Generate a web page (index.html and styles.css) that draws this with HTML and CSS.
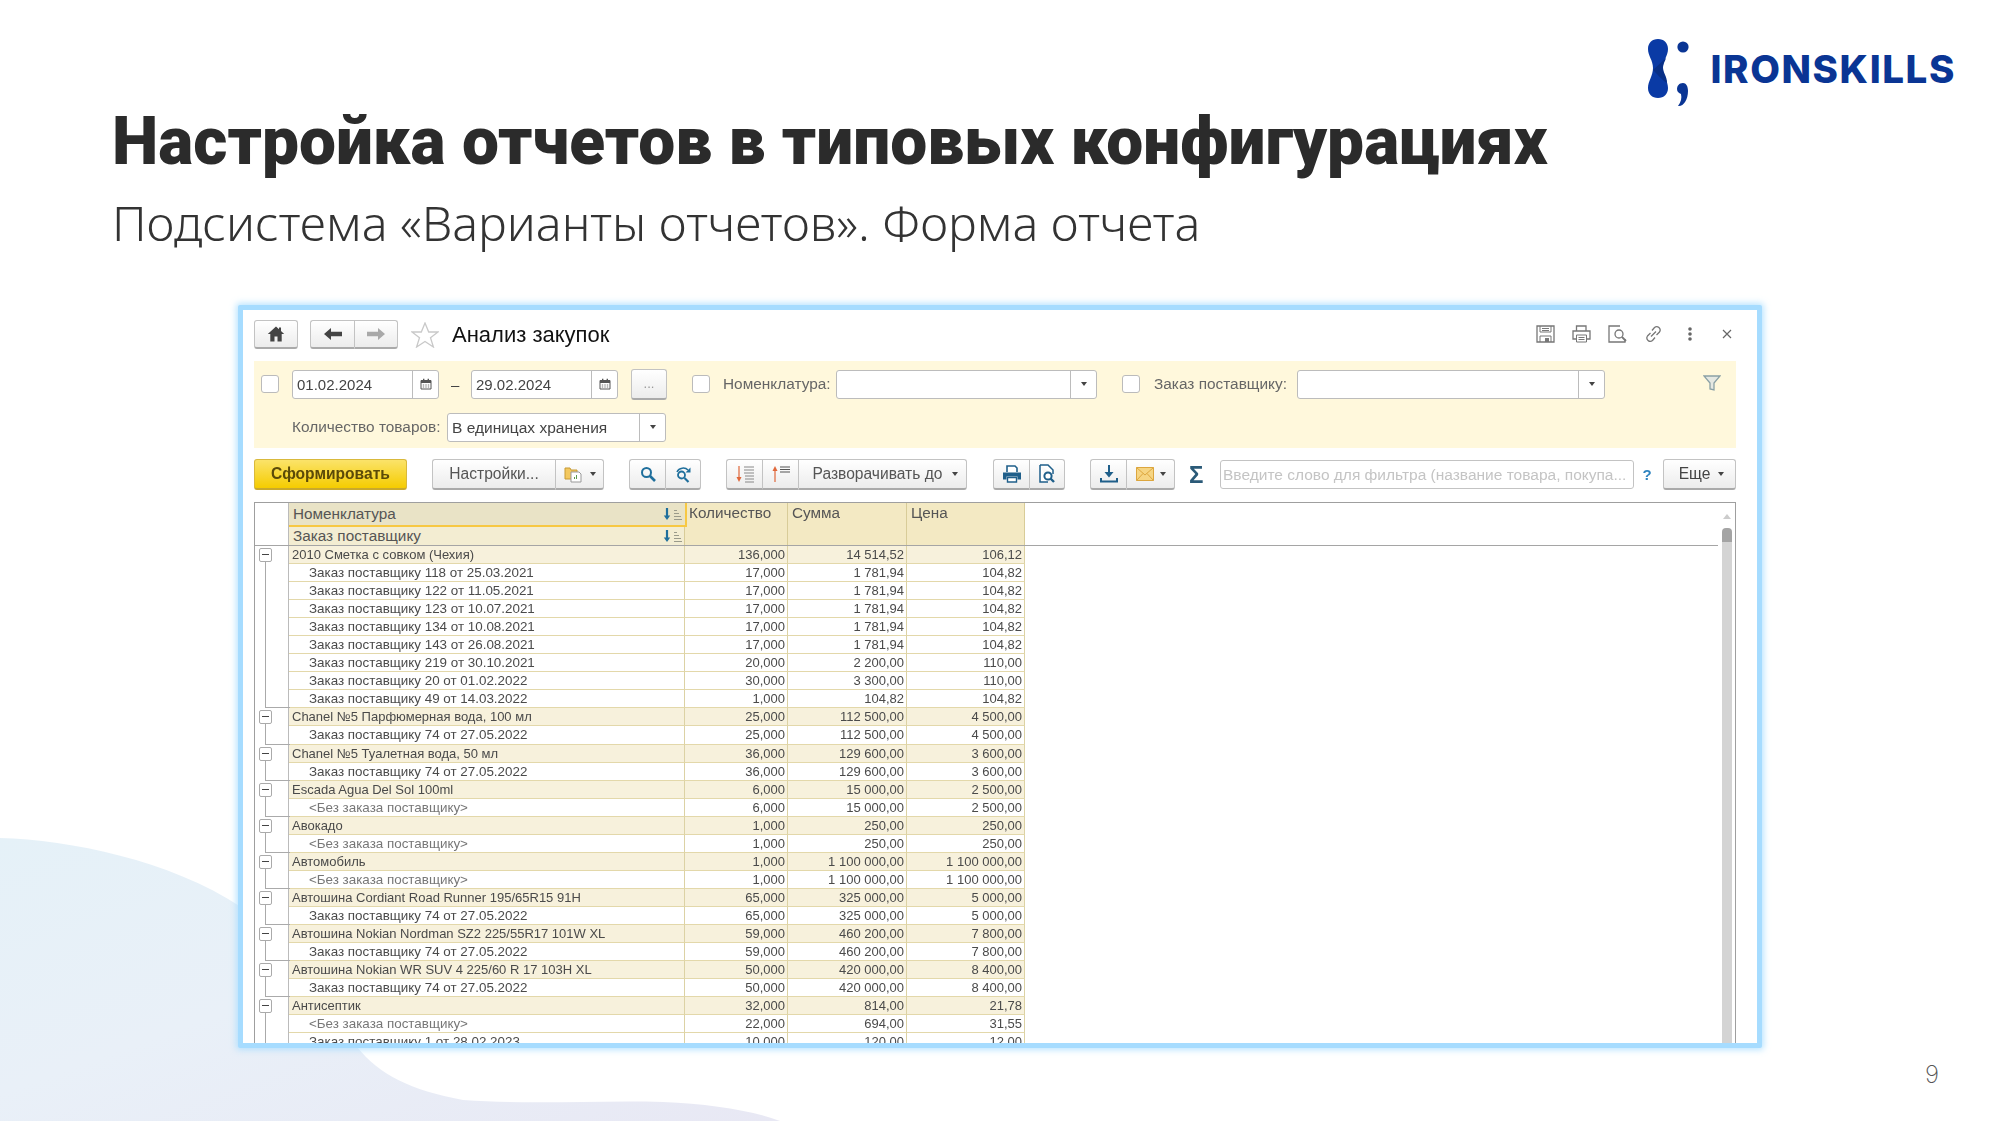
FILE: index.html
```html
<!DOCTYPE html>
<html lang="ru">
<head>
<meta charset="utf-8">
<title>Настройка отчетов</title>
<link rel="stylesheet" href="styles.css">
</head>
<body>
<svg class="sprite" width="0" height="0">
  <defs>
    <symbol id="i-cal" viewBox="0 0 12 12"><path d="M1 2.5h10v8.5H1z" fill="none" stroke="#555" stroke-width="1"/><path d="M1 2h10v3H1zM3 .8h1.4v2H3zM7.6 .8H9v2H7.6z" fill="#555"/><path d="M2.8 6.4h1.4v1.2H2.8zM5.3 6.4h1.4v1.2H5.3zM7.8 6.4h1.4v1.2H7.8zM2.8 8.4h1.4v1.2H2.8zM5.3 8.4h1.4v1.2H5.3zM7.8 8.4h1.4v1.2H7.8z" fill="#777"/></symbol>
    <symbol id="i-sort" viewBox="0 0 20 14"><path d="M4 1v9" stroke="#1f6f9c" stroke-width="2.2"/><path d="M.8 8.5h6.4L4 13z" fill="#1f6f9c"/><path d="M11 3.5h3M11 6.5h5M11 9.5h7M11 12.5h8" stroke="#9a9a8a" stroke-width="1"/></symbol>
    <symbol id="i-print" viewBox="0 0 20 20"><path d="M5 8V2h8l2 2v4" fill="#fff" stroke="#1f5f8a" stroke-width="1.6"/><path d="M1 8.5h18v7h-3.5v-3h-11v3H1z" fill="#1f5f8a"/><path d="M5.5 13.5h9V18h-9z" fill="#fff" stroke="#1f5f8a" stroke-width="1.4"/></symbol>
    <symbol id="i-preview" viewBox="0 0 20 20"><path d="M3 1h8l5 5v4M3 1v17h8" fill="#fff" stroke="#1f5f8a" stroke-width="1.5"/><circle cx="11" cy="12" r="3.6" fill="#fff" stroke="#1f5f8a" stroke-width="2"/><path d="M13.5 14.5l3.5 3.5" stroke="#1f5f8a" stroke-width="2.4"/></symbol>
  </defs>
</svg>
<main class="slide">
  <svg class="blob" viewBox="0 0 800 300" width="800" height="300" aria-hidden="true">
    <defs><linearGradient id="blobfill" x1="0" y1="0" x2="1" y2="1"><stop offset="0" stop-color="#e5f1f8"/><stop offset=".45" stop-color="#e9f0f8"/><stop offset="1" stop-color="#e8e8f4"/></linearGradient></defs>
    <path d="M0 13C70 15 170 35 241 82L300 150C320 190 340 200 357 222C380 250 410 265 463 275C530 280 600 275 663 277C710 279 750 285 780 296L0 296Z" fill="url(#blobfill)"/>
  </svg>

  <header class="brand">
    <div class="logo">
      <svg class="logo-mark" viewBox="0 0 44 70" width="44" height="70" aria-hidden="true">
        <path d="M11 1C5 1 1 5 1 11C1 18 6 22 6 30C6 38 1 43 1 50C1 56 5 60 11 60C17 60 21 56 21 50C21 43 16 38 16 30C16 22 21 18 21 11C21 5 17 1 11 1Z" fill="#0a3aa5"/>
        <path d="M6 32C10 36 15 42 20 45C20 38 16 35 16 30C16 25 18 24 19 20Z" fill="#082f86"/>
        <circle cx="36" cy="9" r="5.6" fill="#0a3594"/>
        <path d="M36 45C32 45 30 48 30 51C30 54 32 55 34 56C35 60 34 64 31 68C36 69 41 62 41 53C41 48 39 45 36 45Z" fill="#0a3594"/>
      </svg>
      <span class="logo-text">IRONSKILLS</span>
    </div>
  </header>
  <h1 class="title">Настройка отчетов в типовых конфигурациях</h1>
  <p class="subtitle">Подсистема «Варианты отчетов». Форма отчета</p>

  <section class="window">
    <div class="window-inner">
      <div class="topbar">
        <button class="btn home"><svg width="18" height="16" viewBox="0 0 18 16"><path d="M9 .5L.8 8h2.5v7.5h4.2V10.500h3v5h4.200V8h2.500L14 5V1.500h-2V3.200z" fill="#444"/></svg></button>
        <div class="btn-group nav">
          <button class="btn seg"><svg width="18" height="12" viewBox="0 0 18 12"><path d="M0 6l7-6v3.800h11v4.400H7V12z" fill="#444"/></svg></button>
          <button class="btn seg"><svg width="18" height="12" viewBox="0 0 18 12"><path d="M18 6l-7-6v3.800H0v4.400h11V12z" fill="#a9a9a9"/></svg></button>
        </div>
        <svg class="star" width="28" height="26" viewBox="0 0 28 26"><path d="M14 1l3.700 9h9.300l-7.500 5.800 2.900 9.200-8.400-5.500-8.400 5.500 2.900-9.200L1 10h9.300z" fill="#fff" stroke="#c9c9c9" stroke-width="1.300"/></svg>
        <span class="form-title">Анализ закупок</span>
        <div class="top-icons">
          <svg width="19" height="18" viewBox="0 0 19 18"><path d="M1 1h17v16H1z" fill="none" stroke="#777" stroke-width="1.300"/><path d="M4 1v6h11V1M6 3.500h7M6 5.500h7" fill="none" stroke="#777"/><path d="M4 17v-6h11v6" fill="none" stroke="#777"/><path d="M9 13h4v4H9z" fill="#777"/></svg>
          <svg width="19" height="18" viewBox="0 0 19 18"><path d="M4.500 6V1H14v5" fill="none" stroke="#777" stroke-width="1.300"/><path d="M4 14H1V6h17v8h-3" fill="none" stroke="#777" stroke-width="1.300"/><path d="M4.500 10h10v7h-10zM6.500 12.500h6M6.500 14.500h6" fill="none" stroke="#777"/></svg>
          <svg width="19" height="18" viewBox="0 0 19 18"><path d="M12 1H1v16h16v-3" fill="none" stroke="#777" stroke-width="1.300"/><circle cx="11" cy="9" r="4" fill="none" stroke="#777" stroke-width="1.300"/><path d="M14 12l4 4" stroke="#777" stroke-width="1.800"/></svg>
          <svg width="19" height="18" viewBox="0 0 19 18"><path d="M8 5.500l2.500-3a3.400 3.400 0 0 1 5 4.500l-3 3M11 12.500l-2.500 3a3.400 3.400 0 0 1-5-4.500l3-3M7 11.500l5-5" fill="none" stroke="#777" stroke-width="1.300"/></svg>
          <svg class="dots" width="4" height="14" viewBox="0 0 4 14"><circle cx="2" cy="2" r="1.800" fill="#666"/><circle cx="2" cy="7" r="1.800" fill="#666"/><circle cx="2" cy="12" r="1.800" fill="#666"/></svg>
          <svg class="close" width="10" height="10" viewBox="0 0 10 10"><path d="M1 1l8 8M9 1l-8 8" stroke="#666" stroke-width="1.200"/></svg>
        </div>
      </div>

      <div class="filters">
        <div class="filter-row">
          <span class="check first"></span>
          <div class="field date"><span class="field-val">01.02.2024</span><span class="field-btn"><svg width="12" height="12"><use href="#i-cal"/></svg></span></div>
          <span class="dash">–</span>
          <div class="field date"><span class="field-val">29.02.2024</span><span class="field-btn"><svg width="12" height="12"><use href="#i-cal"/></svg></span></div>
          <button class="btn more">...</button>
          <span class="check second"></span>
          <span class="label lbl-nom">Номенклатура:</span>
          <div class="field combo-a"><span class="field-val"></span><span class="field-btn"><i class="caret"></i></span></div>
          <span class="check third"></span>
          <span class="label lbl-ord">Заказ поставщику:</span>
          <div class="field combo-b"><span class="field-val"></span><span class="field-btn"><i class="caret"></i></span></div>
          <svg class="funnel" width="18" height="16" viewBox="0 0 18 16"><path d="M1 1h16l-6 7v7l-4-1V8z" fill="#e5e8e2" stroke="#8aa0a5" stroke-width="1.300"/></svg>
        </div>
        <div class="filter-row second-row">
          <span class="label lbl-qty">Количество товаров:</span>
          <div class="field combo-c"><span class="field-val">В единицах хранения</span><span class="field-btn"><i class="caret"></i></span></div>
        </div>
      </div>

      <div class="toolbar">
        <button class="btn primary">Сформировать</button>
        <div class="btn-group g-settings">
          <button class="btn seg s-settings">Настройки...</button>
          <button class="btn seg s-folder"><svg width="18" height="18" viewBox="0 0 18 18"><path d="M1 3h5l1 2h6v9H1z" fill="#f3c85f" stroke="#c79a35"/><path d="M7 7h8l2 2v8H7z" fill="#fff" stroke="#999"/><path d="M10 14v-2h1v2zM12 14v-4h1v4z" fill="#5b9a4a"/></svg><i class="caret"></i></button>
        </div>
        <div class="btn-group g-find">
          <button class="btn seg s-icon"><svg width="16" height="16" viewBox="0 0 16 16"><circle cx="6.500" cy="6.500" r="4.500" fill="none" stroke="#1f6f9c" stroke-width="2"/><path d="M10 10l5 5" stroke="#1f6f9c" stroke-width="2.600"/></svg></button>
          <button class="btn seg s-icon"><svg width="17" height="17" viewBox="0 0 17 17"><circle cx="6.500" cy="9" r="3.500" fill="none" stroke="#1f6f9c" stroke-width="1.800"/><path d="M9.500 12l4 4" stroke="#1f6f9c" stroke-width="2.200"/><path d="M2 6C4 1.500 10 1 13 4" fill="none" stroke="#1f6f9c" stroke-width="1.500"/><path d="M15.500 1.500v5h-5z" fill="#1f6f9c"/></svg></button>
        </div>
        <div class="btn-group g-expand">
          <button class="btn seg s-icon"><svg width="20" height="18" viewBox="0 0 20 18"><path d="M4 1v14" stroke="#e0673a" stroke-width="1.200"/><path d="M1.500 12h5L4 17z" fill="#e0673a"/><path d="M9 2h10M9 5h10M9 8h10M10 11h9M10 14h9M10 17h9" stroke="#888" stroke-width="1"/></svg></button>
          <button class="btn seg s-icon"><svg width="20" height="18" viewBox="0 0 20 18"><path d="M4 3v14" stroke="#e0673a" stroke-width="1.200"/><path d="M1.500 6h5L4 1z" fill="#e0673a"/><path d="M9 2h10M9 4.500h10M9 7h10" stroke="#555" stroke-width="1.200"/></svg></button>
          <button class="btn seg s-expand">Разворачивать до<i class="caret"></i></button>
        </div>
        <div class="btn-group g-print">
          <button class="btn seg s-icon"><svg width="20" height="20"><use href="#i-print"/></svg></button>
          <button class="btn seg s-icon"><svg width="20" height="20"><use href="#i-preview"/></svg></button>
        </div>
        <div class="btn-group g-send">
          <button class="btn seg s-icon"><svg width="18" height="18" viewBox="0 0 18 18"><path d="M9 0v9" stroke="#1f5f8a" stroke-width="2"/><path d="M4.500 7h9L9 12.500z" fill="#1f5f8a"/><path d="M1 13v3.500h16V13" fill="none" stroke="#1f5f8a" stroke-width="2"/></svg></button>
          <button class="btn seg s-mail"><svg width="18" height="14" viewBox="0 0 18 14"><path d="M.5.500h17v13H.5z" fill="#f6d583" stroke="#dca63e"/><path d="M.5.500L9 8l8.500-7.500M.5 13.500L7 6.500M17.500 13.500L11 6.500" fill="none" stroke="#dca63e"/></svg><i class="caret"></i></button>
        </div>
        <span class="sigma">Σ</span>
        <div class="search">Введите слово для фильтра (название товара, покупа...</div>
        <span class="help">?</span>
        <button class="btn esche">Еще<i class="caret"></i></button>
      </div>

      <div class="report">
        <div class="grid">
          <div class="grid-head">
            <div class="tree-head"></div>
            <div class="h-name">
              <div class="h-nom"><span>Номенклатура</span><svg width="20" height="14"><use href="#i-sort"/></svg></div>
              <div class="h-ord"><span>Заказ поставщику</span><svg width="20" height="14"><use href="#i-sort"/></svg></div>
            </div>
            <div class="h-col c-qty">Количество</div>
            <div class="h-col c-sum">Сумма</div>
            <div class="h-col c-price">Цена</div>
          </div>

          <div class="row group"><div class="tree t-box"><i class="minus"></i></div><div class="c c-name">2010 Сметка с совком (Чехия)</div><div class="c c-qty">136,000</div><div class="c c-sum">14 514,52</div><div class="c c-price">106,12</div></div>
          <div class="row"><div class="tree t-mid"></div><div class="c c-name sub">Заказ поставщику 118 от 25.03.2021</div><div class="c c-qty">17,000</div><div class="c c-sum">1 781,94</div><div class="c c-price">104,82</div></div>
          <div class="row"><div class="tree t-mid"></div><div class="c c-name sub">Заказ поставщику 122 от 11.05.2021</div><div class="c c-qty">17,000</div><div class="c c-sum">1 781,94</div><div class="c c-price">104,82</div></div>
          <div class="row"><div class="tree t-mid"></div><div class="c c-name sub">Заказ поставщику 123 от 10.07.2021</div><div class="c c-qty">17,000</div><div class="c c-sum">1 781,94</div><div class="c c-price">104,82</div></div>
          <div class="row"><div class="tree t-mid"></div><div class="c c-name sub">Заказ поставщику 134 от 10.08.2021</div><div class="c c-qty">17,000</div><div class="c c-sum">1 781,94</div><div class="c c-price">104,82</div></div>
          <div class="row"><div class="tree t-mid"></div><div class="c c-name sub">Заказ поставщику 143 от 26.08.2021</div><div class="c c-qty">17,000</div><div class="c c-sum">1 781,94</div><div class="c c-price">104,82</div></div>
          <div class="row"><div class="tree t-mid"></div><div class="c c-name sub">Заказ поставщику 219 от 30.10.2021</div><div class="c c-qty">20,000</div><div class="c c-sum">2 200,00</div><div class="c c-price">110,00</div></div>
          <div class="row"><div class="tree t-mid"></div><div class="c c-name sub">Заказ поставщику 20 от 01.02.2022</div><div class="c c-qty">30,000</div><div class="c c-sum">3 300,00</div><div class="c c-price">110,00</div></div>
          <div class="row"><div class="tree t-end"></div><div class="c c-name sub">Заказ поставщику 49 от 14.03.2022</div><div class="c c-qty">1,000</div><div class="c c-sum">104,82</div><div class="c c-price">104,82</div></div>

          <div class="row group"><div class="tree t-box"><i class="minus"></i></div><div class="c c-name">Chanel №5 Парфюмерная вода, 100 мл</div><div class="c c-qty">25,000</div><div class="c c-sum">112 500,00</div><div class="c c-price">4 500,00</div></div>
          <div class="row"><div class="tree t-end"></div><div class="c c-name sub">Заказ поставщику 74 от 27.05.2022</div><div class="c c-qty">25,000</div><div class="c c-sum">112 500,00</div><div class="c c-price">4 500,00</div></div>

          <div class="row group"><div class="tree t-box"><i class="minus"></i></div><div class="c c-name">Chanel №5 Туалетная вода, 50 мл</div><div class="c c-qty">36,000</div><div class="c c-sum">129 600,00</div><div class="c c-price">3 600,00</div></div>
          <div class="row"><div class="tree t-end"></div><div class="c c-name sub">Заказ поставщику 74 от 27.05.2022</div><div class="c c-qty">36,000</div><div class="c c-sum">129 600,00</div><div class="c c-price">3 600,00</div></div>

          <div class="row group"><div class="tree t-box"><i class="minus"></i></div><div class="c c-name">Escada Agua Del Sol 100ml</div><div class="c c-qty">6,000</div><div class="c c-sum">15 000,00</div><div class="c c-price">2 500,00</div></div>
          <div class="row"><div class="tree t-end"></div><div class="c c-name sub muted">&lt;Без заказа поставщику&gt;</div><div class="c c-qty">6,000</div><div class="c c-sum">15 000,00</div><div class="c c-price">2 500,00</div></div>

          <div class="row group"><div class="tree t-box"><i class="minus"></i></div><div class="c c-name">Авокадо</div><div class="c c-qty">1,000</div><div class="c c-sum">250,00</div><div class="c c-price">250,00</div></div>
          <div class="row"><div class="tree t-end"></div><div class="c c-name sub muted">&lt;Без заказа поставщику&gt;</div><div class="c c-qty">1,000</div><div class="c c-sum">250,00</div><div class="c c-price">250,00</div></div>

          <div class="row group"><div class="tree t-box"><i class="minus"></i></div><div class="c c-name">Автомобиль</div><div class="c c-qty">1,000</div><div class="c c-sum">1 100 000,00</div><div class="c c-price">1 100 000,00</div></div>
          <div class="row"><div class="tree t-end"></div><div class="c c-name sub muted">&lt;Без заказа поставщику&gt;</div><div class="c c-qty">1,000</div><div class="c c-sum">1 100 000,00</div><div class="c c-price">1 100 000,00</div></div>

          <div class="row group"><div class="tree t-box"><i class="minus"></i></div><div class="c c-name">Автошина Cordiant Road Runner 195/65R15 91H</div><div class="c c-qty">65,000</div><div class="c c-sum">325 000,00</div><div class="c c-price">5 000,00</div></div>
          <div class="row"><div class="tree t-end"></div><div class="c c-name sub">Заказ поставщику 74 от 27.05.2022</div><div class="c c-qty">65,000</div><div class="c c-sum">325 000,00</div><div class="c c-price">5 000,00</div></div>

          <div class="row group"><div class="tree t-box"><i class="minus"></i></div><div class="c c-name">Автошина Nokian Nordman SZ2 225/55R17 101W XL</div><div class="c c-qty">59,000</div><div class="c c-sum">460 200,00</div><div class="c c-price">7 800,00</div></div>
          <div class="row"><div class="tree t-end"></div><div class="c c-name sub">Заказ поставщику 74 от 27.05.2022</div><div class="c c-qty">59,000</div><div class="c c-sum">460 200,00</div><div class="c c-price">7 800,00</div></div>

          <div class="row group"><div class="tree t-box"><i class="minus"></i></div><div class="c c-name">Автошина Nokian WR SUV 4 225/60 R 17 103H XL</div><div class="c c-qty">50,000</div><div class="c c-sum">420 000,00</div><div class="c c-price">8 400,00</div></div>
          <div class="row"><div class="tree t-end"></div><div class="c c-name sub">Заказ поставщику 74 от 27.05.2022</div><div class="c c-qty">50,000</div><div class="c c-sum">420 000,00</div><div class="c c-price">8 400,00</div></div>

          <div class="row group"><div class="tree t-box"><i class="minus"></i></div><div class="c c-name">Антисептик</div><div class="c c-qty">32,000</div><div class="c c-sum">814,00</div><div class="c c-price">21,78</div></div>
          <div class="row"><div class="tree t-mid"></div><div class="c c-name sub muted">&lt;Без заказа поставщику&gt;</div><div class="c c-qty">22,000</div><div class="c c-sum">694,00</div><div class="c c-price">31,55</div></div>
          <div class="row"><div class="tree t-mid"></div><div class="c c-name sub">Заказ поставщику 1 от 28.02.2023</div><div class="c c-qty">10,000</div><div class="c c-sum">120,00</div><div class="c c-price">12,00</div></div>
        </div>
        <div class="scrollbar"><i class="scroll-up"></i><i class="scroll-thumb"></i><i class="scroll-track"></i></div>
      </div>
    </div>
  </section>
  <span class="page-num">9</span>
</main>
</body>
</html>
```
FILE: styles.css
```css
* { box-sizing: border-box; }
html, body { margin: 0; padding: 0; background: #fff; }
.sprite { position: absolute; }
.slide {
  position: relative;
  width: 2000px;
  height: 1125px;
  overflow: hidden;
  background: #fff;
  font-family: "Noto Sans", "Open Sans", sans-serif;
}
.blob { position: absolute; left: 0; top: 825px; }

.brand { display: flex; justify-content: flex-end; height: 107px; padding: 38px 44px 0 0; position: relative; }
.logo { display: flex; align-items: flex-start; }
.logo-mark { display: block; }
.logo-text {
  margin: 11px 0 0 19px;
  font-family: Inter, "Liberation Sans", sans-serif;
  font-weight: 800;
  font-size: 38.500px;
  line-height: 40px;
  letter-spacing: 1.600px;
  color: #0a3594;
}
.title {
  position: relative;
  margin: 0 0 0 112px;
  font-family: Roboto, "Noto Sans", sans-serif;
  font-size: 65.800px;
  font-weight: 900;
  line-height: 70px;
  color: #2b2b2b;
  white-space: nowrap;
}
.subtitle {
  position: relative;
  margin: 13px 0 0 112px;
  font-size: 48.400px;
  font-weight: 300;
  line-height: 64px;
  color: #333;
  white-space: nowrap;
}

.window {
  position: relative;
  margin: 51px 0 0 238px;
  width: 1524px;
  height: 743px;
  border: 5px solid #a6dcff;
  border-radius: 2px;
  background: #fff;
  overflow: hidden;
  box-shadow: 0 0 6px 2px rgba(166, 220, 255, .75);
}
.window-inner {
  padding: 10px 21px 0 11px;
  height: 100%;
  font-family: "Liberation Sans", Arial, sans-serif;
  color: #444;
  filter: blur(.35px);
}

.btn {
  display: flex;
  align-items: center;
  justify-content: center;
  padding: 0;
  border: 1px solid #c3c3c3;
  border-bottom: 2px solid #aaa;
  border-radius: 3px;
  background: linear-gradient(#fff, #ececec);
  font: inherit;
  color: #444;
}
.btn-group { display: flex; }
.btn-group .seg { border-radius: 0; border-right-width: 0; height: 100%; }
.btn-group .seg:first-child { border-radius: 3px 0 0 3px; }
.btn-group .seg:last-child { border-radius: 0 3px 3px 0; border-right-width: 1px; }
.caret { display: inline-block; width: 0; height: 0; border: 3.500px solid transparent; border-top: 4px solid #444; border-bottom: 0; }

.topbar { display: flex; align-items: center; height: 29px; }
.home { width: 44px; height: 29px; }
.nav { margin-left: 12px; height: 29px; }
.nav .seg { width: 44px; }
.star { margin-left: 13px; }
.form-title { margin-left: 13px; font-size: 22px; color: #111; }
.top-icons { margin-left: auto; display: flex; align-items: center; gap: 17px; padding-bottom: 1px; }
.dots { margin-left: 8px; }
.close { margin-left: 13px; margin-right: 4px; }

.filters { margin: 12px 0 0 0; height: 87px; background: #fff8dc; padding-top: 8px; width: 1482px; }
.filter-row { display: flex; align-items: center; height: 30px; }
.second-row { margin-top: 13px; }
.check { width: 18px; height: 18px; background: #fff; border: 1px solid #bbb; border-radius: 3px; flex: none; }
.check.first { margin-left: 7px; }
.check.second { margin-left: 25px; }
.check.third { margin-left: 25px; }
.field { display: flex; height: 29px; background: #fff; border: 1px solid #bcbcbc; border-radius: 3px; font-size: 15px; color: #444; flex: none; }
.field-val { flex: 1; padding: 0 4px; line-height: 27px; white-space: nowrap; overflow: hidden; }
.field-btn { width: 26px; border-left: 1px solid #bcbcbc; display: flex; align-items: center; justify-content: center; }
.date { width: 147px; margin-left: 13px; }
.date + .dash + .date { margin-left: 10px; }
.dash { margin-left: 12px; width: 10px; font-size: 15px; }
.more { margin-left: 13px; width: 36px; height: 31px; color: #999; font-size: 13px; }
.label { font-size: 15.400px; color: #666; white-space: nowrap; }
.lbl-nom { margin-left: 13px; width: 113px; }
.combo-a { width: 261px; }
.lbl-ord { margin-left: 14px; width: 143px; }
.combo-b { width: 308px; }
.funnel { margin-left: 98px; margin-top: -3px; }
.lbl-qty { margin-left: 38px; width: 155px; }
.combo-c { width: 219px; font-size: 15.500px; }

.toolbar { display: flex; align-items: center; height: 31px; margin-top: 11px; width: 1482px; font-size: 15.600px; }
.toolbar .btn, .toolbar .btn-group { height: 31px; flex: none; }
.primary {
  width: 153px;
  background: linear-gradient(#fbe36a, #f5cc00);
  border-color: #d9b93c;
  border-bottom-color: #c9a92c;
  color: #5b4a08;
  font-weight: 700;
}
.g-settings { margin-left: 25px; }
.s-settings { width: 123px; color: #555; }
.s-folder { width: 49px; gap: 8px; }
.g-find { margin-left: 25px; }
.s-icon { width: 36px; }
.g-expand { margin-left: 25px; }
.s-expand { width: 169px; gap: 10px; padding-left: 6px; color: #555; }
.g-print { margin-left: 26px; }
.g-send { margin-left: 25px; }
.s-mail { width: 49px; gap: 6px; }
.sigma { margin-left: 14px; width: 31px; font-size: 24px; font-weight: 700; color: #2b5a78; }
.search { width: 414px; height: 29px; background: #fff; border: 1px solid #c3c3c3; border-radius: 3px; padding: 0 2px; line-height: 27px; color: #c4c4c4; font-size: 15.500px; white-space: nowrap; overflow: hidden; flex: none; }
.help { width: 26px; text-align: center; color: #2f84c0; font-size: 15px; font-weight: 700; flex: none; }
.esche { width: 73px; gap: 8px; padding-left: 4px; margin-left: auto; }

.report { display: flex; margin-top: 12px; width: 1482px; height: 600px; border: 1px solid #9f9f9f; border-bottom: 0; font-size: 13px; }
.grid { flex: 1; min-width: 0; }
.scrollbar { width: 17px; display: flex; flex-direction: column; align-items: center; }
.scroll-up { margin: 11px 0 9px; width: 0; height: 0; border: 4px solid transparent; border-bottom: 5px solid #ccc; border-top: 0; }
.scroll-thumb { width: 10px; height: 14px; background: #a4a4a4; border-radius: 4px 4px 0 0; }
.scroll-track { width: 10px; flex: 1; background: #d4d4d4; }

.grid-head { display: flex; height: 43px; border-bottom: 1px solid #a5a5a5; font-size: 15.300px; color: #555; }
.tree-head { width: 34px; border-right: 1px solid #bbb; flex: none; }
.h-name { width: 396px; flex: none; background: #f3edd2; border-right: 1px solid #d8cc98; position: relative; }
.h-nom, .h-ord { display: flex; align-items: center; justify-content: space-between; padding: 0 1px 0 4px; }
.h-nom { height: 24px; background: #e9e3c6; border-bottom: 2px solid #f7c843; margin-right: -3px; border-right: 2px solid #f7c843; position: relative; padding-right: 2px; }
.h-ord { height: 17px; }
.h-col { flex: none; background: #f3e9c3; border-right: 1px solid #d8cc98; padding: 1px 4px; }
.c-qty { width: 103px; }
.c-sum { width: 119px; }
.c-price { width: 118px; }

.row { display: flex; height: 18.050px; line-height: 17.500px; color: #4a4a4a; }
.c { flex: none; height: 100%; border-right: 1px solid #dcd2a4; border-bottom: 1.500px solid #e3d8aa; padding: 0 2px; white-space: nowrap; text-align: right; background: #fff; overflow: hidden; }
.group .c { background: #f7f1dc; }
.c-name { width: 396px; text-align: left; padding-left: 3px; }
.sub { padding-left: 20px; font-size: 13.400px; }
.muted { color: #777; }
.tree { position: relative; width: 34px; flex: none; border-right: 1px solid #bbb; }
.t-box::before, .t-mid::before { content: ""; position: absolute; left: 10px; top: 0; bottom: 0; width: 1px; background: #aaa; }
.t-end::before { content: ""; position: absolute; left: 10px; top: 0; bottom: 0; width: 24px; border-left: 1px solid #aaa; border-bottom: 1px solid #aaa; }
.t-box::before { top: 9px; }
.minus { position: absolute; left: 4px; top: 2px; width: 13px; height: 14px; background: #fff; border: 1px solid #aaa; border-radius: 2px; z-index: 1; }
.minus::after { content: ""; position: absolute; left: 2px; right: 2px; top: 5px; height: 1px; background: #444; }

.page-num { position: absolute; left: 1925px; top: 1057px; font-family: Inter, sans-serif; font-weight: 200; font-size: 24px; line-height: 36px; color: #555; }
```
